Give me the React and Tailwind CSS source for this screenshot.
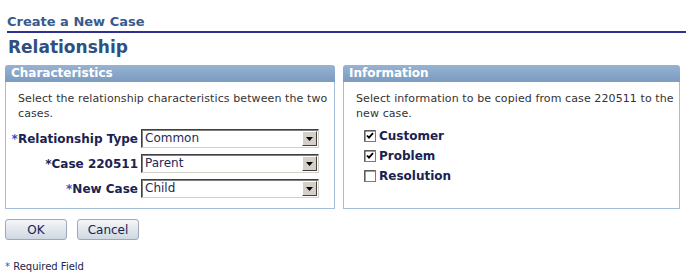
import React from "react"

const font = { fontFamily: '"DejaVu Sans", Verdana, sans-serif' }

function Select({ value }) {
  return (
    <div className="flex h-[19px] w-[178px] items-stretch border border-t-[#404040] border-l-[#404040] border-r-[#d4d0c8] border-b-[#d4d0c8] bg-white shadow-[inset_1px_1px_0_#808080]">
      <span className="flex-1 pl-[3px] text-[12px] leading-[17px] text-[#1e2a5a]">{value}</span>
      <span className="m-[1px] flex w-[15px] items-center justify-center border border-t-white border-l-white border-r-[#404040] border-b-[#404040] bg-[#d4d0c8]">
        <svg width="7" height="4" viewBox="0 0 7 4">
          <path d="M0 0h7L3.5 4z" fill="#000" />
        </svg>
      </span>
    </div>
  )
}

function Field({ label, value, blueStar = true }) {
  return (
    <div className="flex h-[25px] items-center">
      <label className="w-[135px] pr-[3px] text-right text-[12px] font-bold text-[#1a2350]">
        <span className={blueStar ? "text-[#2e55c8]" : ""}>*</span>
        {label}
      </label>
      <Select value={value} />
    </div>
  )
}

function Check({ label, checked }) {
  return (
    <div className="flex h-[20px] items-center gap-[3px]">
      <svg width="12" height="12" viewBox="0 0 12 12">
        <rect x="0.5" y="0.5" width="11" height="11" fill="#fff" stroke="#7a7a7a" />
        <path d="M1 1h10M1 1v10" stroke="#404040" />
        {checked && <path d="M3 5.5l2 2.2L9 3.2" fill="none" stroke="#000" strokeWidth="1.8" />}
      </svg>
      <span className="text-[12px] font-bold text-[#1a2350]">{label}</span>
    </div>
  )
}

function Panel({ title, width, children }) {
  return (
    <div className="flex flex-col" style={{ width }}>
      <div className="h-[17px] rounded-t-[3px] bg-gradient-to-b from-[#97b3d3] to-[#7b9bc0] pl-[6px] text-[12px] font-bold leading-[17px] text-white">
        {title}
      </div>
      <div className="h-[127px] border border-t-0 border-[#a3bedb] bg-white">{children}</div>
    </div>
  )
}

export default function App() {
  return (
    <div className="h-[279px] w-[691px] overflow-hidden bg-white" style={font}>
      <div className="mx-[7px] mr-[5px] mt-[14px] border-b-2 border-[#2e3192] pb-[1px] text-[13px] font-bold leading-[16px] text-[#3a5a8c]">
        Create a New Case
      </div>
      <h1 className="mt-[4px] pl-[8px] text-[17px] font-bold leading-[20px] text-[#2f4f7f]">Relationship</h1>

      <div className="mt-[8px] flex gap-[8px] pl-[5px]">
        <Panel title="Characteristics" width={330}>
          <p className="pl-[12px] pr-[2px] pt-[9px] text-[11px] leading-[15px] tracking-[0.1px] text-[#333]">
            Select the relationship characteristics between the two cases.
          </p>
          <div className="mt-[5px]">
            <Field label="Relationship Type" value="Common" />
            <Field label="Case 220511" value="Parent" blueStar={false} />
            <Field label="New Case" value="Child" />
          </div>
        </Panel>
        <Panel title="Information" width={337}>
          <p className="pl-[12px] pr-0 pt-[9px] text-[11px] leading-[15px] tracking-[0.1px] text-[#333]">
            Select information to be copied from case 220511 to the new case.
          </p>
          <div className="mt-[5px] pl-[20px]">
            <Check label="Customer" checked />
            <Check label="Problem" checked />
            <Check label="Resolution" />
          </div>
        </Panel>
      </div>

      <div className="mt-[10px] flex gap-[10px] pl-[5px]">
        {["OK", "Cancel"].map((b) => (
          <button
            key={b}
            className="h-[21px] w-[62px] rounded-[3px] border border-[#9aa9bc] bg-gradient-to-b from-[#f4f6f8] to-[#cfd8e2] text-[12px] text-[#1a2350]"
          >
            {b}
          </button>
        ))}
      </div>

      <p className="mt-[19px] pl-[5px] text-[10px] text-[#1a2350]">
        <span className="text-[#2e55c8]">*</span> Required Field
      </p>
    </div>
  )
}
